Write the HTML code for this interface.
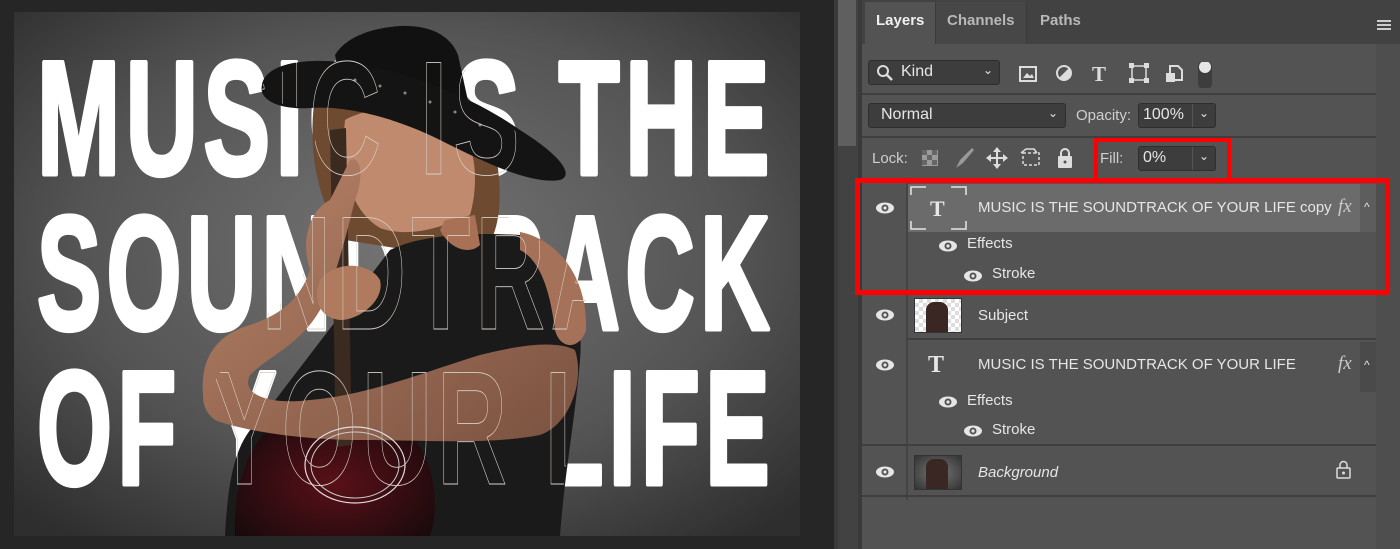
<!DOCTYPE html>
<html><head><style>
*{margin:0;padding:0;box-sizing:border-box}
body{width:1400px;height:549px;background:#262626;position:relative;overflow:hidden;font-family:"Liberation Sans",sans-serif;color:#e6e6e6}
.a{position:absolute}
.t{font-size:15px;white-space:nowrap}
.box{position:absolute;background:#3d3d3d;border:1px solid #2e2e2e;border-radius:3px}
.sep{position:absolute;left:862px;width:514px;height:2px;background:#3f3f3f}
.big text{letter-spacing:9px}
</style></head><body>
<svg class="a" style="left:0;top:0" width="834" height="549">
<defs>
<radialGradient id="bg" cx="0.5" cy="0.45" r="0.7"><stop offset="0" stop-color="#747474"/><stop offset="0.6" stop-color="#545454"/><stop offset="1" stop-color="#2e2e2e"/></radialGradient>
<radialGradient id="gt" cx="0.5" cy="0.6" r="0.6"><stop offset="0" stop-color="#5a1018"/><stop offset="1" stop-color="#1a0a0c"/></radialGradient>
<linearGradient id="sk" x1="0" y1="0" x2="1" y2="1"><stop offset="0" stop-color="#b98368"/><stop offset="1" stop-color="#7a5240"/></linearGradient>
<clipPath id="wc"><path d="M262 85 L300 60 L340 30 L460 28 L470 100 L565 165 L565 182 L520 200 L500 232 L560 245 L586 300 L585 380 L565 470 L560 536 L225 536 L203 400 L250 325 L300 290 L315 200 L315 110 L262 100Z"/></clipPath>
</defs>
<rect x="14" y="12" width="786" height="524" fill="url(#bg)"/>
<g class="big" font-family="Liberation Sans, sans-serif" font-weight="bold" font-size="162" fill="#fff" stroke="#fff" stroke-width="5" stroke-linejoin="round">
<text x="37" y="174" textLength="738" lengthAdjust="spacingAndGlyphs">MUSIC IS THE</text>
<text x="37" y="329" textLength="738" lengthAdjust="spacingAndGlyphs">SOUNDTRACK</text>
<text x="37" y="484" textLength="738" lengthAdjust="spacingAndGlyphs">OF YOUR LIFE</text>
</g>
<!-- woman -->
<path d="M318 80 C305 140 315 200 345 240 L470 260 C500 250 505 200 495 150 C485 110 460 80 420 70 C370 62 330 65 318 80Z" fill="#6e4a30"/>
<path d="M225 536 C228 480 235 440 260 420 L390 250 C420 235 470 232 520 235 C560 250 585 300 580 360 C575 420 565 470 560 536Z" fill="#1b1a1a"/>
<path d="M520 232 C560 240 588 280 586 330 C580 350 560 350 555 330 C550 290 540 260 520 250Z" fill="#a57158"/>
<path d="M345 120 C340 170 350 210 380 228 C410 238 440 228 470 215 C480 180 475 140 455 120 C420 105 370 105 345 120Z" fill="#c08a6e"/>
<path d="M440 230 C450 250 470 255 480 245 L475 215 L445 220Z" fill="#a87055"/>
<path d="M235 536 C232 470 260 410 320 405 C380 400 420 430 430 470 C438 500 435 520 430 536Z" fill="url(#gt)"/>
<path d="M330 130 L346 128 L352 445 L336 447Z" fill="#3b2a1f"/>
<path d="M203 395 C200 360 215 335 250 325 C280 315 300 300 310 270 C300 240 310 210 330 200 L350 160 C360 155 365 175 355 200 C345 240 335 280 320 310 C300 345 270 355 250 375 C240 395 270 405 310 400 C370 395 430 370 480 355 C520 345 555 340 575 350 C585 380 570 425 540 435 C490 445 420 440 360 440 C300 440 240 430 215 420 C205 412 203 404 203 395Z" fill="url(#sk)"/>
<path d="M320 280 C335 260 370 262 380 280 C385 300 360 320 340 320 C320 318 312 300 320 280Z" fill="#b07a5e"/>
<path d="M335 55 C345 38 370 28 400 26 C430 25 450 35 458 55 L470 110 C440 105 400 95 340 80Z" fill="#111"/>
<path d="M262 85 C265 65 300 58 340 62 C400 68 470 95 520 130 C560 155 575 175 560 180 C530 185 480 160 440 140 C400 120 350 105 310 108 C280 110 258 100 262 85Z" fill="#141414"/>
<g fill="#888"><circle cx="355" cy="80" r="1.5"/><circle cx="380" cy="86" r="1.5"/><circle cx="405" cy="93" r="1.5"/><circle cx="430" cy="102" r="1.5"/><circle cx="455" cy="112" r="1.5"/><circle cx="480" cy="125" r="1.5"/></g>
<ellipse cx="355" cy="465" rx="50" ry="38" fill="none" stroke="#ddd" stroke-width="1.2"/>
<ellipse cx="355" cy="465" rx="44" ry="33" fill="none" stroke="#ccc" stroke-width="1"/>
<g class="big" clip-path="url(#wc)" font-family="Liberation Sans, sans-serif" font-weight="bold" font-size="162" fill="none" stroke="#d8d0c8" stroke-width="0.9">
<text x="37" y="174" textLength="738" lengthAdjust="spacingAndGlyphs">MUSIC IS THE</text>
<text x="37" y="329" textLength="738" lengthAdjust="spacingAndGlyphs">SOUNDTRACK</text>
<text x="37" y="484" textLength="738" lengthAdjust="spacingAndGlyphs">OF YOUR LIFE</text>
</g>
</svg>
<!-- scrollbar -->
<div class="a" style="left:834px;top:0;width:28px;height:549px;background:#3a3a3a"></div>
<div class="a" style="left:838px;top:0;width:20px;height:549px;background:#424242"></div>
<div class="a" style="left:838px;top:0;width:18px;height:146px;background:#5f5f5f"></div>
<!-- panel -->
<div class="a" style="left:862px;top:0;width:538px;height:549px;background:#535353"></div>
<div class="a" style="left:1376px;top:44px;width:24px;height:505px;background:#4e4e4e"></div>
<div class="a" style="left:862px;top:0;width:538px;height:44px;background:#424242"></div>
<div class="a" style="left:865px;top:2px;width:70px;height:42px;background:#535353"></div>
<div class="a" style="left:935px;top:2px;width:92px;height:42px;background:#474747;border-left:1px solid #3a3a3a;border-right:1px solid #3a3a3a"></div>
<div class="a t" style="left:876px;top:12px;font-weight:bold;color:#f0f0f0">Layers</div>
<div class="a t" style="left:947px;top:12px;font-weight:bold;color:#b8b8b8">Channels</div>
<div class="a t" style="left:1040px;top:12px;font-weight:bold;color:#b8b8b8">Paths</div>
<div class="a" style="left:1377px;top:20px;width:14px;height:10px;border-top:2px solid #ccc;border-bottom:2px solid #ccc"></div>
<div class="a" style="left:1377px;top:24px;width:14px;height:2px;background:#ccc"></div>
<!-- filter row -->
<div class="box" style="left:868px;top:60px;width:132px;height:25px"></div>
<svg class="a" style="left:876px;top:64px" width="18" height="18"><circle cx="7" cy="7" r="5" fill="none" stroke="#ddd" stroke-width="2"/><path d="M11 11 L16 16" stroke="#ddd" stroke-width="2.5"/></svg>
<div class="a t" style="left:901px;top:63px;font-size:16px">Kind</div>
<div class="a t" style="left:983px;top:63px;font-size:12px">⌄</div>
<svg class="a" style="left:1018px;top:62px" width="200" height="26">
<rect x="2" y="5" width="16" height="14" fill="none" stroke="#ddd" stroke-width="2"/><path d="M5 16 L9 11 L12 14 L14 12 L16 16Z" fill="#ddd"/>
<circle cx="46" cy="11" r="7" fill="none" stroke="#ddd" stroke-width="2"/><path d="M41 16 L51 6 A7 7 0 0 1 41 16Z" fill="#ddd"/>
<text x="74" y="19" font-family="Liberation Serif,serif" font-weight="bold" font-size="21" fill="#ddd">T</text>
<rect x="114" y="4" width="14" height="14" fill="none" stroke="#ddd" stroke-width="1.5"/><rect x="111" y="1" width="5" height="5" fill="#ddd"/><rect x="126" y="1" width="5" height="5" fill="#ddd"/><rect x="111" y="16" width="5" height="5" fill="#ddd"/><rect x="126" y="16" width="5" height="5" fill="#ddd"/>
<path d="M152 4 L160 4 L164 8 L164 18 L152 18Z" fill="none" stroke="#ddd" stroke-width="2"/><rect x="148" y="11" width="9" height="9" fill="#ddd"/>
<rect x="180" y="-2" width="14" height="30" rx="7" fill="#3d3d3d"/><circle cx="187" cy="5" r="6" fill="#e6e6e6"/>
</svg>
<div class="sep" style="top:93px"></div>
<!-- blend row -->
<div class="box" style="left:868px;top:103px;width:198px;height:25px"></div>
<div class="a t" style="left:881px;top:106px;font-size:16px">Normal</div>
<div class="a t" style="left:1048px;top:106px;font-size:12px">⌄</div>
<div class="a t" style="left:1076px;top:107px;color:#cfcfcf">Opacity:</div>
<div class="box" style="left:1138px;top:103px;width:78px;height:25px"></div>
<div class="a" style="left:1192px;top:104px;width:1px;height:23px;background:#555"></div>
<div class="a t" style="left:1143px;top:106px;font-size:16px">100%</div>
<div class="a t" style="left:1199px;top:106px;font-size:12px">⌄</div>
<div class="sep" style="top:136px"></div>
<!-- lock row -->
<div class="a t" style="left:872px;top:150px;color:#cfcfcf">Lock:</div>
<svg class="a" style="left:920px;top:146px" width="160" height="26">
<rect x="2" y="4" width="16" height="16" fill="#9a9a9a"/><rect x="2" y="4" width="5" height="5" fill="#666"/><rect x="12" y="4" width="5" height="5" fill="#666"/><rect x="7" y="9" width="5" height="5" fill="#666"/><rect x="2" y="14" width="5" height="5" fill="#666"/><rect x="12" y="14" width="5" height="5" fill="#666"/>
<path d="M36 22 L40 14 L52 2 L54 4 L43 17Z" fill="#999"/>
<path d="M77 2 L77 22 M67 12 L87 12" stroke="#ddd" stroke-width="2"/><path d="M73 6 L77 1 L81 6Z M73 18 L77 23 L81 18Z M71 8 L66 12 L71 16Z M83 8 L88 12 L83 16Z" fill="#ddd"/>
<rect x="103" y="7" width="16" height="12" fill="none" stroke="#ddd" stroke-width="1.5" stroke-dasharray="3 2"/><path d="M101 7 L106 3 L114 3 L117 7" fill="none" stroke="#ddd" stroke-width="1.5"/>
<rect x="138" y="10" width="14" height="12" rx="1" fill="#ddd"/><path d="M141 10 V7 A4 4 0 0 1 149 7 V10" fill="none" stroke="#ddd" stroke-width="2"/><circle cx="145" cy="16" r="1.5" fill="#535353"/>
</svg>
<div class="a t" style="left:1100px;top:150px;color:#cfcfcf">Fill:</div>
<div class="box" style="left:1138px;top:146px;width:78px;height:25px"></div>
<div class="a" style="left:1192px;top:147px;width:1px;height:23px;background:#555"></div>
<div class="a t" style="left:1143px;top:149px;font-size:16px">0%</div>
<div class="a t" style="left:1199px;top:149px;font-size:12px">⌄</div>
<!-- layers -->
<div class="a" style="left:906px;top:180px;width:2px;height:320px;background:#444"></div>
<div class="a" style="left:908px;top:184px;width:452px;height:48px;background:#6b6b6b"></div>
<div class="a" style="left:1360px;top:184px;width:16px;height:48px;background:#5d5d5d"></div>
<div class="a" style="left:1360px;top:342px;width:16px;height:50px;background:#4a4a4a"></div>
<div class="sep" style="left:906px;top:338px;width:470px"></div>
<div class="sep" style="left:862px;top:444px;width:514px"></div>
<div class="sep" style="left:862px;top:495px;width:514px"></div>
<div class="sep" style="left:862px;top:292px;width:514px"></div>
<svg class="a" style="left:910px;top:186px" width="58" height="44"><path d="M1 9 V1 H16 M41 1 H56 V9 M56 35 V43 H41 M16 43 H1 V35" fill="none" stroke="#e6e6e6" stroke-width="1.5"/><text x="20" y="30" font-family="Liberation Serif,serif" font-weight="bold" font-size="22" fill="#e6e6e6">T</text></svg>
<svg class="a" style="left:926px;top:348px" width="30" height="30"><text x="2" y="24" font-family="Liberation Serif,serif" font-weight="bold" font-size="24" fill="#e6e6e6">T</text></svg>
<div class="a t" style="left:978px;top:199px">MUSIC IS THE SOUNDTRACK OF YOUR LIFE copy</div>
<div class="a t" style="left:978px;top:356px">MUSIC IS THE SOUNDTRACK OF YOUR LIFE</div>
<div class="a t" style="left:1338px;top:196px;font-size:19px;font-style:italic;font-family:'Liberation Serif',serif;color:#ccc">fx</div>
<div class="a t" style="left:1338px;top:353px;font-size:19px;font-style:italic;font-family:'Liberation Serif',serif;color:#ccc">fx</div>
<div class="a t" style="left:1364px;top:200px;font-size:12px">^</div>
<div class="a t" style="left:1364px;top:358px;font-size:12px">^</div>
<div class="a t" style="left:967px;top:235px">Effects</div>
<div class="a t" style="left:992px;top:265px">Stroke</div>
<div class="a t" style="left:967px;top:392px">Effects</div>
<div class="a t" style="left:992px;top:421px">Stroke</div>
<div class="a t" style="left:978px;top:307px">Subject</div>
<div class="a t" style="left:978px;top:464px;font-style:italic">Background</div>
<div class="a" style="left:914px;top:298px;width:48px;height:35px;background:repeating-conic-gradient(#ddd 0 25%,#fff 0 50%) 0 0/8px 8px;border:1px solid #333"></div>
<div class="a" style="left:926px;top:302px;width:22px;height:30px;background:#3a2622;border-radius:8px 8px 0 0"></div>
<div class="a" style="left:914px;top:455px;width:48px;height:35px;background:radial-gradient(#777,#333);border:1px solid #333"></div>
<div class="a" style="left:926px;top:459px;width:22px;height:30px;background:#3a2622;border-radius:8px 8px 0 0"></div>
<svg class="a" style="left:1335px;top:460px" width="18" height="20"><rect x="2" y="8" width="13" height="10" rx="1" fill="none" stroke="#ddd" stroke-width="1.5"/><path d="M5 8 V5 A3.5 3.5 0 0 1 12 5 V8" fill="none" stroke="#ddd" stroke-width="1.5"/><circle cx="8.5" cy="13" r="1.5" fill="#ddd"/></svg>
<svg class="a" style="left:0;top:0" width="1400" height="549">
<defs><g id="e"><ellipse cx="10" cy="6" rx="9" ry="5.5" fill="#e6e6e6"/><circle cx="10" cy="6" r="3.5" fill="#535353"/><circle cx="10" cy="6" r="1.6" fill="#e6e6e6"/></g></defs>
<use href="#e" x="875" y="202"/><use href="#e" x="875" y="309"/><use href="#e" x="875" y="359"/><use href="#e" x="875" y="466"/>
<use href="#e" x="938" y="240"/><use href="#e" x="963" y="270"/><use href="#e" x="938" y="396"/><use href="#e" x="963" y="425"/>
</svg>
<!-- red boxes -->
<div class="a" style="left:1094px;top:138px;width:137px;height:40px;border:4px solid #f00;border-bottom:none"></div>
<div class="a" style="left:855px;top:178px;width:535px;height:117px;border:5px solid #f00"></div>
</body></html>
